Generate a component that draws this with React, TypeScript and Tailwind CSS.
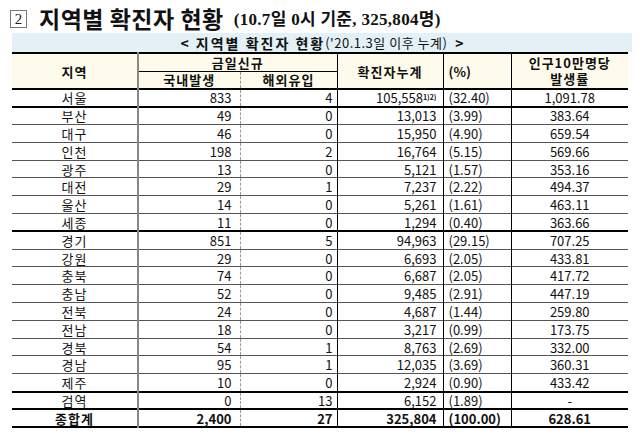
import React from 'react';

interface Row {
  region: string;
  domestic: string;
  overseas: string;
  total: string;
  pct: string;
  rate: string;
  thick?: boolean;
}

const ROWS: Row[] = [
  { region: '서울', domestic: '833', overseas: '4', total: '105,558', pct: '(32.40)', rate: '1,091.78', thick: true },
  { region: '부산', domestic: '49', overseas: '0', total: '13,013', pct: '(3.99)', rate: '383.64' },
  { region: '대구', domestic: '46', overseas: '0', total: '15,950', pct: '(4.90)', rate: '659.54' },
  { region: '인천', domestic: '198', overseas: '2', total: '16,764', pct: '(5.15)', rate: '569.66' },
  { region: '광주', domestic: '13', overseas: '0', total: '5,121', pct: '(1.57)', rate: '353.16' },
  { region: '대전', domestic: '29', overseas: '1', total: '7,237', pct: '(2.22)', rate: '494.37' },
  { region: '울산', domestic: '14', overseas: '0', total: '5,261', pct: '(1.61)', rate: '463.11' },
  { region: '세종', domestic: '11', overseas: '0', total: '1,294', pct: '(0.40)', rate: '363.66', thick: true },
  { region: '경기', domestic: '851', overseas: '5', total: '94,963', pct: '(29.15)', rate: '707.25' },
  { region: '강원', domestic: '29', overseas: '0', total: '6,693', pct: '(2.05)', rate: '433.81' },
  { region: '충북', domestic: '74', overseas: '0', total: '6,687', pct: '(2.05)', rate: '417.72' },
  { region: '충남', domestic: '52', overseas: '0', total: '9,485', pct: '(2.91)', rate: '447.19' },
  { region: '전북', domestic: '24', overseas: '0', total: '4,687', pct: '(1.44)', rate: '259.80' },
  { region: '전남', domestic: '18', overseas: '0', total: '3,217', pct: '(0.99)', rate: '173.75' },
  { region: '경북', domestic: '54', overseas: '1', total: '8,763', pct: '(2.69)', rate: '332.00' },
  { region: '경남', domestic: '95', overseas: '1', total: '12,035', pct: '(3.69)', rate: '360.31' },
  { region: '제주', domestic: '10', overseas: '0', total: '2,924', pct: '(0.90)', rate: '433.42', thick: true },
  { region: '검역', domestic: '0', overseas: '13', total: '6,152', pct: '(1.89)', rate: '-', thick: true },
];

const SANS = 'font-["Noto_Sans_CJK_KR",sans-serif]';

export default function App() {
  return (
    <div className={`w-[640px] h-[435px] bg-white overflow-hidden ${SANS} text-[#111]`}>
      {/* Title */}
      <div className="flex items-end h-[32px] pl-[10px] pt-[4px]">
        <span className="w-[17px] h-[18px] mb-[4px] border border-[#777] flex items-center justify-center font-['Liberation_Serif',serif] text-[15px] leading-none text-[#222]">
          2
        </span>
        <span className="ml-[12px] text-[23px] font-bold leading-[28px] tracking-[0.5px]">지역별 확진자 현황</span>
        <span className="ml-[10px] mb-[1px] font-['Liberation_Serif','Noto_Sans_CJK_KR',serif] text-[17px] font-bold leading-[22px] tracking-[0.3px]">
          (10.7일 0시 기준, 325,804명)
        </span>
      </div>

      {/* Subtitle bar */}
      <div className="ml-[12px] mt-[1px] w-[620px] h-[19px] bg-[#e3f0f5] flex items-center justify-center text-[14px] leading-none">
        <span className="font-semibold tracking-[2px]">&lt; 지역별 확진자 현황</span>
        <span className="text-[13px] font-normal tracking-[0.5px]">('20.1.3일 이후 누계)</span>
        <span className="ml-[8px] font-bold">&gt;</span>
      </div>

      {/* Table */}
      <table className="ml-[12px] w-[616px] border-collapse table-fixed text-[13px] leading-none">
        <colgroup>
          <col className="w-[126px]" />
          <col className="w-[102px]" />
          <col className="w-[97px]" />
          <col className="w-[106px]" />
          <col className="w-[68px]" />
          <col className="w-[117px]" />
        </colgroup>
        <thead className="bg-[#fffbec] font-semibold">
          <tr className="h-[18px] border-t-2 border-black">
            <th rowSpan={2} className="border-r-2 border-[#888] font-semibold tracking-[1px]">지역</th>
            <th colSpan={2} className="border-r border-black border-b border-[#888] font-semibold tracking-[1px]">
              금일신규
            </th>
            <th rowSpan={2} className="border-r border-black font-semibold tracking-[1px]">확진자누계</th>
            <th rowSpan={2} className="border-r border-black text-left pl-[5px] font-semibold">(%)</th>
            <th rowSpan={2} className="font-semibold tracking-[1px]">
              <span className="block leading-[16px]">인구10만명당</span>
              <span className="block leading-[16px]">발생률</span>
            </th>
          </tr>
          <tr className="h-[18px] border-b-2 border-black">
            <th className="border-r border-dashed border-[#999] font-semibold tracking-[1px]">국내발생</th>
            <th className="border-r border-black font-semibold tracking-[1px]">해외유입</th>
          </tr>
        </thead>
        <tbody>
          {ROWS.map((r) => (
            <tr
              key={r.region}
              className={`h-[17.8px] border-b ${r.thick ? 'border-b-2 border-black' : 'border-[#555]'}`}
            >
              <td className="text-center border-r-2 border-[#888] tracking-[1px]">{r.region}</td>
              <td className="text-right pr-[8px] border-r border-dashed border-[#999]">{r.domestic}</td>
              <td className="text-right pr-[4px] border-r border-black">{r.overseas}</td>
              <td className="text-right pr-[6px] border-r border-black">
                {r.total}
                {r.region === '서울' && <sup className="text-[7px] font-bold">1)2)</sup>}
              </td>
              <td className="text-left pl-[5px] border-r border-black">{r.pct}</td>
              <td className="text-center">{r.rate}</td>
            </tr>
          ))}
          <tr className="h-[17.8px] border-b-2 border-black font-bold">
            <td className="text-center border-r-2 border-[#888] tracking-[1px]">종합계</td>
            <td className="text-right pr-[8px] border-r border-dashed border-[#999]">2,400</td>
            <td className="text-right pr-[4px] border-r border-black">27</td>
            <td className="text-right pr-[6px] border-r border-black">325,804</td>
            <td className="text-left pl-[5px] border-r border-black">(100.00)</td>
            <td className="text-center">628.61</td>
          </tr>
        </tbody>
      </table>
    </div>
  );
}
